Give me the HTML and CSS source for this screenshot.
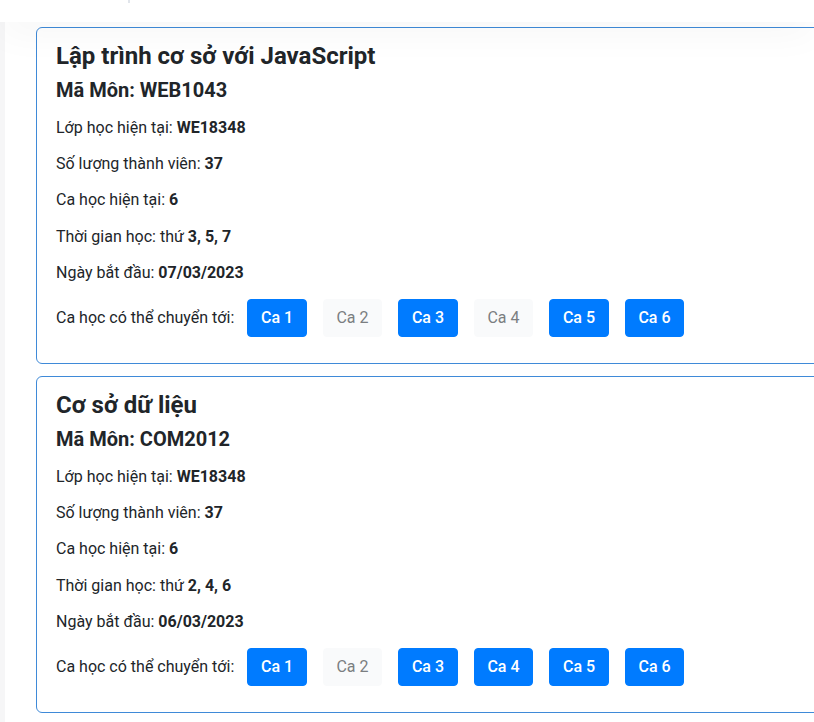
FILE: index.html
```html
<!DOCTYPE html>
<html lang="vi">
<head>
<meta charset="utf-8">
<title>Chuyển ca học</title>
<link rel="stylesheet" href="styles.css">
</head>
<body>
<header class="topbar"><span class="topbar-mark"></span></header>
<div class="layout">
  <aside class="side"></aside>
  <main class="content">
    <section class="card">
      <h4 class="card-title">Lập trình cơ sở với JavaScript</h4>
      <h5 class="card-code">Mã Môn: WEB1043</h5>
      <div class="info">
        <p>Lớp học hiện tại: <b>WE18348</b></p>
        <p>Số lượng thành viên: <b>37</b></p>
        <p>Ca học hiện tại: <b>6</b></p>
        <p>Thời gian học: thứ <b>3, 5, 7</b></p>
        <p>Ngày bắt đầu: <b>07/03/2023</b></p>
      </div>
      <div class="shift-row">
        <span class="shift-label">Ca học có thể chuyển tới:</span>
        <div class="shift-buttons">
          <button class="btn btn-primary">Ca 1</button>
          <button class="btn btn-light" disabled>Ca 2</button>
          <button class="btn btn-primary">Ca 3</button>
          <button class="btn btn-light" disabled>Ca 4</button>
          <button class="btn btn-primary">Ca 5</button>
          <button class="btn btn-primary">Ca 6</button>
        </div>
      </div>
    </section>
    <section class="card">
      <h4 class="card-title">Cơ sở dữ liệu</h4>
      <h5 class="card-code">Mã Môn: COM2012</h5>
      <div class="info">
        <p>Lớp học hiện tại: <b>WE18348</b></p>
        <p>Số lượng thành viên: <b>37</b></p>
        <p>Ca học hiện tại: <b>6</b></p>
        <p>Thời gian học: thứ <b>2, 4, 6</b></p>
        <p>Ngày bắt đầu: <b>06/03/2023</b></p>
      </div>
      <div class="shift-row">
        <span class="shift-label">Ca học có thể chuyển tới:</span>
        <div class="shift-buttons">
          <button class="btn btn-primary">Ca 1</button>
          <button class="btn btn-light" disabled>Ca 2</button>
          <button class="btn btn-primary">Ca 3</button>
          <button class="btn btn-primary">Ca 4</button>
          <button class="btn btn-primary">Ca 5</button>
          <button class="btn btn-primary">Ca 6</button>
        </div>
      </div>
    </section>
  </main>
</div>
</body>
</html>
```
FILE: styles.css
```css
* { box-sizing: border-box; }
html, body { margin: 0; padding: 0; }
body {
  font-family: Roboto, "Liberation Sans", sans-serif;
  font-size: 16px;
  color: #212529;
  background: #fff;
  overflow: hidden;
}
.topbar {
  height: 22px;
  background: #fff;
  position: relative;
  z-index: 2;
  box-shadow: 0 6px 40px rgba(0, 0, 0, 0.06);
}
.topbar-mark {
  position: absolute;
  left: 128px;
  top: 0;
  width: 2px;
  height: 3px;
  background: #e1e5eb;
}
.layout {
  display: flex;
}
.side {
  width: 5px;
  flex: none;
  background: #f6f6f7;
}
.content {
  flex: 1;
  overflow: hidden;
  padding: 5px 0 0 31px;
}
.card {
  border: 1px solid #3f8ad8;
  border-radius: 6px;
  padding: 14px 20px 26px 19px;
  margin: 0 -12px 12px 0;
  background: transparent;
}
.card-title {
  font-size: 24px;
  font-weight: 700;
  line-height: 1.2;
  margin: 0 0 7px;
}
.card-code {
  font-size: 20px;
  font-weight: 700;
  line-height: 1.2;
  margin: 0 0 8px;
}
.info {
  margin-top: 14px;
}
.info p {
  margin: 0 0 12.3px;
  line-height: 24px;
}
.info b { font-weight: 700; }
.shift-row {
  display: flex;
  align-items: center;
  margin-top: 14px;
}
.shift-label {
  line-height: 24px;
}
.shift-buttons {
  display: flex;
  gap: 16px;
  margin-left: 13px;
}
.btn {
  font-family: inherit;
  font-size: 16px;
  font-weight: 400;
  line-height: 24px;
  height: 38px;
  padding: 6px 12.7px;
  border: 1px solid transparent;
  border-radius: 4px;
}
.btn-primary {
  background: #007bff;
  border-color: #007bff;
  color: #fff;
  font-weight: 500;
}
.btn-light {
  background: #f9fafb;
  border-color: #f9fafb;
  color: #7b7e81;
}
```
